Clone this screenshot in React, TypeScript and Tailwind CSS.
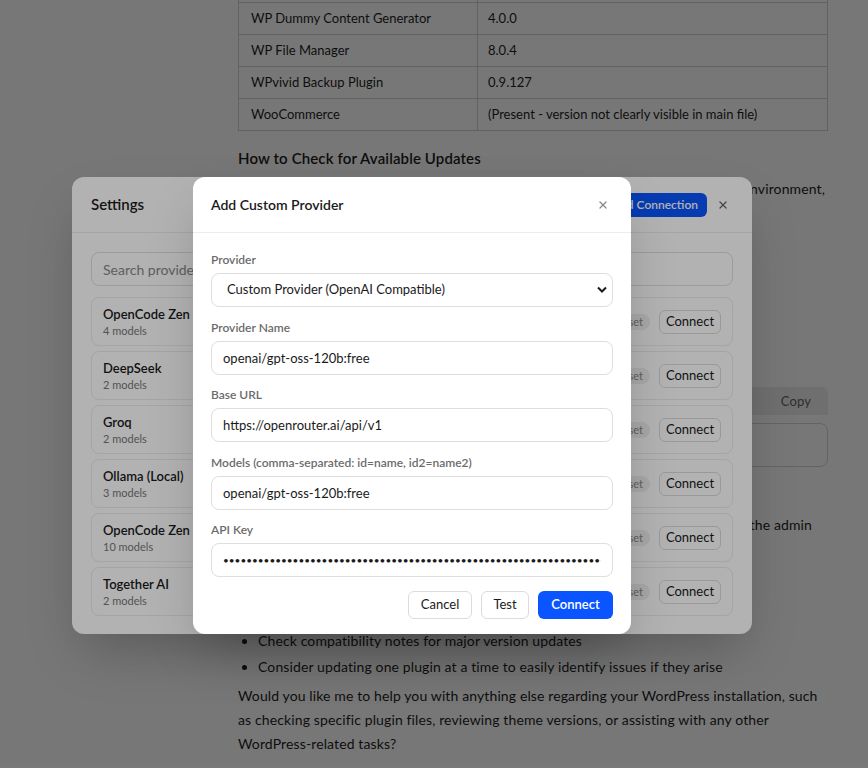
import { X, Plus } from 'lucide-react';

const plugins = [
  { name: 'UpdraftPlus', version: '1.24.1' },
  { name: 'WP Dummy Content Generator', version: '4.0.0' },
  { name: 'WP File Manager', version: '8.0.4' },
  { name: 'WPvivid Backup Plugin', version: '0.9.127' },
  { name: 'WooCommerce', version: '(Present - version not clearly visible in main file)' },
];

const providers = [
  { name: 'OpenCode Zen', models: '4 models' },
  { name: 'DeepSeek', models: '2 models' },
  { name: 'Groq', models: '2 models' },
  { name: 'Ollama (Local)', models: '3 models' },
  { name: 'OpenCode Zen', models: '10 models' },
  { name: 'Together AI', models: '2 models' },
];

function Field({ label, children }: { label: string; children: React.ReactNode }) {
  return (
    <div className="flex flex-col gap-[5px]">
      <label className="text-[12px] leading-[16px] font-semibold text-[#6b6b6b]">{label}</label>
      {children}
    </div>
  );
}

const boxCls = 'h-[34px] w-full rounded-lg border border-[#dedede] bg-white px-[11px] text-[#1a1a1a] outline-none';
const inputCls = boxCls + ' text-[13px]';

export default function App() {
  return (
    <div className="relative h-[768px] w-[868px] overflow-hidden bg-white font-['Lato','Noto_Sans',sans-serif] text-[#1f1f1f]">
      {/* Chat content behind */}
      <main className="ml-[238px] w-[590px] text-[14px] leading-[24px] tracking-[0.12px]">
        <table className="-mt-[30px] w-full table-fixed border-collapse text-[13px] tracking-normal">
          <colgroup>
            <col className="w-[239px]" />
            <col />
          </colgroup>
          <tbody>
            {plugins.map((p) => (
              <tr key={p.name}>
                <td className="border border-[#cfcfcf] px-3 py-[6px] leading-[19px]">{p.name}</td>
                <td className="border border-[#cfcfcf] px-[10px] py-[6px] leading-[19px]">{p.version}</td>
              </tr>
            ))}
          </tbody>
        </table>

        <h3 className="mt-[16px] text-[15px] leading-[22px] font-semibold">How to Check for Available Updates</h3>

        <p className="mt-[8px] pr-[3px] text-right">
          Since I cannot reach the WordPress.org plugin repository from this environment,
          <br />
          <span className="block text-left">you can check for updates in one of these ways:</span>
        </p>
        <ol className="mt-[25px] list-decimal pl-6">
          <li>Log in to your WordPress admin dashboard</li>
          <li>Go to Plugins → Installed Plugins</li>
          <li>Look for the “update available” notice</li>
          <li>Or check Dashboard → Updates</li>
        </ol>
        <p className="mt-[12px]">You can also use WP-CLI:</p>
        <div className="mt-[5px] flex h-[28px] items-center justify-between rounded-t-md bg-[#eeeeee] px-3 text-[13px] text-[#666]">
          <span>bash</span>
          <span className="pr-[5px]">Copy</span>
        </div>
        <div className="mt-[8px] h-[44px] rounded-lg border border-[#d6d6d6] px-3 py-[10px] font-['Liberation_Mono',monospace] text-[13px]">
          wp plugin list --update=available
        </div>
        <h4 className="mt-[22px] font-semibold">Recommended</h4>
        <p className="pr-[16px] text-right">Before updating, create a full backup of your site from the admin</p>
        <p>dashboard.</p>
        <ul className="mt-[16px] list-disc pl-5">
          <li className="mb-[2px]">Back up files and database</li>
          <li className="mb-[2px]">Test updates on staging first</li>
          <li className="mb-[2px]">Check compatibility notes for major version updates</li>
          <li className="mb-[2px]">Consider updating one plugin at a time to easily identify issues if they arise</li>
        </ul>
        <p className="mt-[5px]">
          Would you like me to help you with anything else regarding your WordPress installation, such as checking
          specific plugin files, reviewing theme versions, or assisting with any other WordPress-related tasks?
        </p>
      </main>

      <div className="absolute inset-0 bg-black/[0.33]" />

      {/* Settings modal */}
      <div className="absolute left-[72px] top-[177px] flex h-[457px] w-[680px] flex-col rounded-xl bg-white shadow-2xl">
        <div className="flex h-[56px] items-center justify-between border-b border-[#ececec] pl-[19px] pr-[23px]">
          <h2 className="text-[15px] font-semibold text-[#1a1a1a]">Settings</h2>
          <div className="flex items-center gap-[10px]">
            <button className="flex h-[24px] items-center gap-1 rounded-md bg-[#0a55ff] px-[9px] text-[12px] font-semibold text-white">
              <Plus className="h-3 w-3" strokeWidth={3} />
              Add Connection
            </button>
            <X className="h-[12px] w-[12px] text-[#666]" strokeWidth={2.5} />
          </div>
        </div>
        <div className="flex flex-col px-[19px] pt-[19px]">
          <input
            className="h-[34px] rounded-lg border border-[#e0e0e0] px-[11px] text-[14px] outline-none placeholder:text-[#888]"
            placeholder="Search providers..."
          />
          <div className="mt-[11px] flex flex-col gap-[5px]">
            {providers.map((p, i) => (
              <div
                key={i}
                className="flex h-[49px] items-center justify-between rounded-lg border border-[#ececec] pl-[11px] pr-[11px]"
              >
                <div className="flex flex-col">
                  <span className="text-[13px] leading-[17px] font-semibold text-[#1a1a1a]">{p.name}</span>
                  <span className="text-[11px] leading-[15px] text-[#777]">{p.models}</span>
                </div>
                <div className="flex items-center gap-[9px]">
                  <span className="rounded-full bg-[#efefef] px-[7px] text-[11px] leading-[16px] text-[#888]">Not set</span>
                  <button className="h-[24px] w-[62px] rounded-md border border-[#dcdcdc] bg-white text-[13px] text-[#1a1a1a]">
                    Connect
                  </button>
                </div>
              </div>
            ))}
          </div>
        </div>
      </div>

      <div className="absolute inset-0 bg-black/30" />

      {/* Add Custom Provider modal */}
      <div className="absolute left-[193px] top-[177px] flex h-[457px] w-[438px] flex-col rounded-xl bg-white shadow-2xl">
        <div className="flex h-[56px] items-center justify-between border-b border-[#ececec] pl-[18px] pr-[22px]">
          <h2 className="text-[14px] font-semibold text-[#1a1a1a]">Add Custom Provider</h2>
          <X className="h-[12px] w-[12px] text-[#888]" strokeWidth={2.5} />
        </div>
        <div className="flex flex-col gap-[12.5px] px-[18px] pt-[19px]">
          <Field label="Provider">
            <div className="relative">
              <select className={inputCls + ' appearance-none pl-[15px]'} defaultValue="custom">
                <option value="custom">Custom Provider (OpenAI Compatible)</option>
              </select>
              <svg
                className="pointer-events-none absolute right-[6px] top-[13px]"
                width="10"
                height="7"
                viewBox="0 0 10 7"
                fill="none"
              >
                <path d="M1 1.5l4 4 4-4" stroke="#1a1a1a" strokeWidth="2" />
              </svg>
            </div>
          </Field>
          <Field label="Provider Name">
            <input className={inputCls} defaultValue="openai/gpt-oss-120b:free" />
          </Field>
          <Field label="Base URL">
            <input className={inputCls} defaultValue="https://openrouter.ai/api/v1" />
          </Field>
          <Field label="Models (comma-separated: id=name, id2=name2)">
            <input className={inputCls} defaultValue="openai/gpt-oss-120b:free" />
          </Field>
          <Field label="API Key">
            <input
              type="password"
              className={boxCls + ' text-[10px]'}
              defaultValue="sk-or-v1-000000000000000000000000000000000000000000000000000000000000000000000000000000000000"
            />
          </Field>
          <div className="mt-[1px] flex justify-end gap-[9px]">
            <button className="h-[28px] w-[64px] rounded-md border border-[#dcdcdc] bg-white text-[13px] text-[#1a1a1a]">
              Cancel
            </button>
            <button className="h-[28px] w-[48px] rounded-md border border-[#dcdcdc] bg-white text-[13px] text-[#1a1a1a]">
              Test
            </button>
            <button className="h-[28px] w-[75px] rounded-md bg-[#0a55ff] text-[13px] font-semibold text-white">
              Connect
            </button>
          </div>
        </div>
      </div>
    </div>
  );
}
